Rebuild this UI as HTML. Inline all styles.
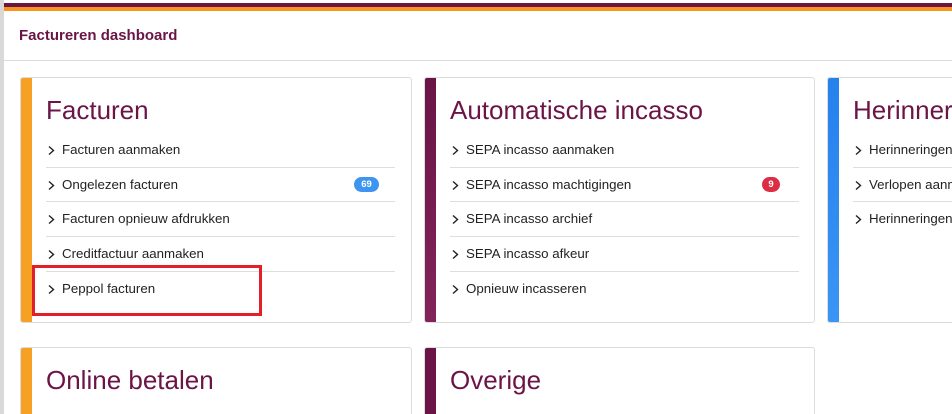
<!DOCTYPE html>
<html style="width:952px;height:414px;overflow:hidden"><head><meta charset="utf-8"><style>
*{box-sizing:border-box;margin:0;padding:0}
html,body{overflow:hidden}
body{width:952px;height:414px;overflow:hidden;background:#fff;font-family:"Liberation Sans",sans-serif;position:relative}
.gray{position:absolute;left:0;top:0;width:4px;height:414px;background:#d9d9d9}
.top1{position:absolute;left:4px;top:3px;right:0;height:4px;background:#6b1446}
.top2{position:absolute;left:4px;top:7px;right:0;height:4px;background:#f7941d}
.hdr{position:absolute;left:4px;top:11px;right:0;height:50px;border-bottom:1px solid #dcdcdc;background:#fff}
.hdr h1{position:absolute;left:15px;top:16px;font-size:15px;font-weight:bold;color:#6b1446}
.card{position:absolute;background:#fff;border:1px solid #dcdcdc;border-radius:3px;overflow:hidden}
.card .bar{position:absolute;left:0;top:0;bottom:0;width:11px}
.card h2{position:absolute;left:25px;top:17px;font-size:26px;font-weight:normal;color:#6b1446;white-space:nowrap}
.list{position:absolute;left:25px;top:55px;width:349px}
.row{height:34.7px;border-bottom:1px solid #dedede;font-size:13.3px;color:#222;line-height:34px;position:relative;white-space:nowrap}
.row:last-child{border-bottom:none}
.row svg{position:absolute;left:1px;top:12px}
.row span{position:absolute;left:16px}
.badge{position:absolute;top:9px;height:15px;border-radius:8px;color:#fff;font-size:9.5px;font-weight:bold;line-height:15px;text-align:center}
.red{position:absolute;left:32px;top:265px;width:230px;height:51px;border:3px solid #e3202a}
</style></head><body>
<div class="gray"></div><div class="top1"></div><div class="top2"></div>
<div class="hdr"><h1>Factureren dashboard</h1></div>

<div class="card" style="left:20px;top:77px;width:392px;height:246px"><div class="bar" style="background:#f7a124"></div>
<h2>Facturen</h2>
<div class="list">
<div class="row"><svg width="9" height="11" viewBox="0 0 9 11"><path d="M2 1.5l4.5 4-4.5 4" fill="none" stroke="#222" stroke-width="1.4"/></svg><span>Facturen aanmaken</span></div>
<div class="row"><svg width="9" height="11" viewBox="0 0 9 11"><path d="M2 1.5l4.5 4-4.5 4" fill="none" stroke="#222" stroke-width="1.4"/></svg><span>Ongelezen facturen</span><div class="badge" style="left:308px;width:25px;background:#3d95f0">69</div></div>
<div class="row"><svg width="9" height="11" viewBox="0 0 9 11"><path d="M2 1.5l4.5 4-4.5 4" fill="none" stroke="#222" stroke-width="1.4"/></svg><span>Facturen opnieuw afdrukken</span></div>
<div class="row"><svg width="9" height="11" viewBox="0 0 9 11"><path d="M2 1.5l4.5 4-4.5 4" fill="none" stroke="#222" stroke-width="1.4"/></svg><span>Creditfactuur aanmaken</span></div>
<div class="row"><svg width="9" height="11" viewBox="0 0 9 11"><path d="M2 1.5l4.5 4-4.5 4" fill="none" stroke="#222" stroke-width="1.4"/></svg><span>Peppol facturen</span></div>
</div></div>

<div class="card" style="left:424px;top:77px;width:391px;height:246px"><div class="bar" style="background:linear-gradient(#6b1446,#82245a)"></div>
<h2>Automatische incasso</h2>
<div class="list">
<div class="row"><svg width="9" height="11" viewBox="0 0 9 11"><path d="M2 1.5l4.5 4-4.5 4" fill="none" stroke="#222" stroke-width="1.4"/></svg><span>SEPA incasso aanmaken</span></div>
<div class="row"><svg width="9" height="11" viewBox="0 0 9 11"><path d="M2 1.5l4.5 4-4.5 4" fill="none" stroke="#222" stroke-width="1.4"/></svg><span>SEPA incasso machtigingen</span><div class="badge" style="left:312px;width:18px;background:#dc2d45">9</div></div>
<div class="row"><svg width="9" height="11" viewBox="0 0 9 11"><path d="M2 1.5l4.5 4-4.5 4" fill="none" stroke="#222" stroke-width="1.4"/></svg><span>SEPA incasso archief</span></div>
<div class="row"><svg width="9" height="11" viewBox="0 0 9 11"><path d="M2 1.5l4.5 4-4.5 4" fill="none" stroke="#222" stroke-width="1.4"/></svg><span>SEPA incasso afkeur</span></div>
<div class="row"><svg width="9" height="11" viewBox="0 0 9 11"><path d="M2 1.5l4.5 4-4.5 4" fill="none" stroke="#222" stroke-width="1.4"/></svg><span>Opnieuw incasseren</span></div>
</div></div>

<div class="card" style="left:827px;top:77px;width:125px;height:246px;border-right:none;border-radius:3px 0 0 3px"><div class="bar" style="background:linear-gradient(#2581ec,#3a95f5)"></div>
<h2>Herinneringen</h2>
<div class="list">
<div class="row"><svg width="9" height="11" viewBox="0 0 9 11"><path d="M2 1.5l4.5 4-4.5 4" fill="none" stroke="#222" stroke-width="1.4"/></svg><span>Herinneringen aanmaken</span></div>
<div class="row"><svg width="9" height="11" viewBox="0 0 9 11"><path d="M2 1.5l4.5 4-4.5 4" fill="none" stroke="#222" stroke-width="1.4"/></svg><span>Verlopen aanmaningen</span></div>
<div class="row"><svg width="9" height="11" viewBox="0 0 9 11"><path d="M2 1.5l4.5 4-4.5 4" fill="none" stroke="#222" stroke-width="1.4"/></svg><span>Herinneringen archief</span></div>
</div></div>

<div class="card" style="left:20px;top:347px;width:392px;height:67px;border-bottom:none;border-radius:3px 3px 0 0"><div class="bar" style="background:#f7a124"></div><h2>Online betalen</h2></div>
<div class="card" style="left:424px;top:347px;width:391px;height:67px;border-bottom:none;border-radius:3px 3px 0 0"><div class="bar" style="background:#6b1446"></div><h2>Overige</h2></div>

<div class="red"></div>
</body></html>
